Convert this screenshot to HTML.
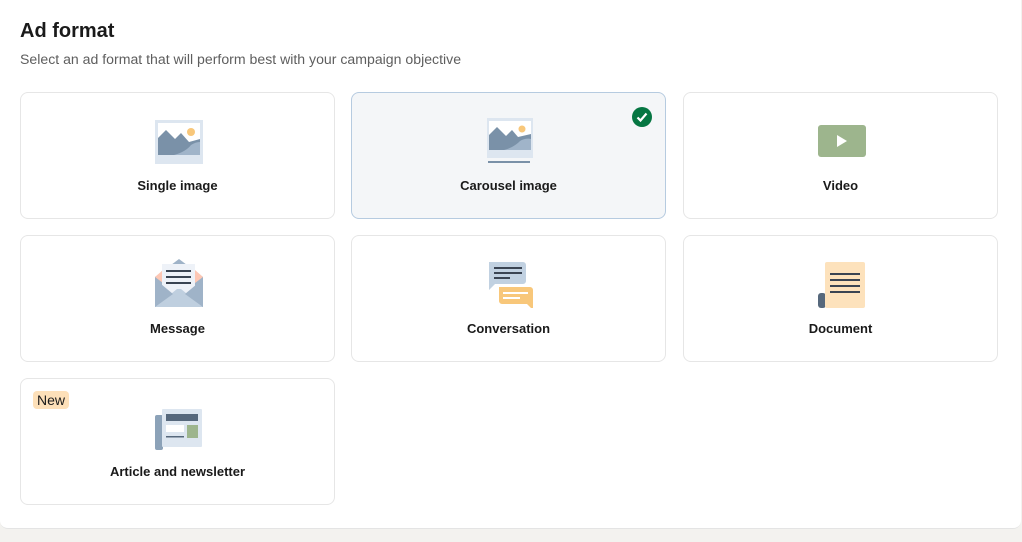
<!DOCTYPE html>
<html><head><style>
body{margin:0;width:1022px;height:542px;background:#f3f2ef;font-family:"Liberation Sans",sans-serif;overflow:hidden;position:relative}
.panel{position:absolute;left:0;top:0;width:1021px;height:528px;background:#fff;border-radius:0 0 8px 8px;border-bottom:1px solid #e4e4e4}
h1{position:absolute;left:20px;top:20px;margin:0;font-size:20px;font-weight:600;color:#1a1a1a}
.sub{position:absolute;left:20px;top:51px;font-size:14.1px;color:#5e5e5e}
.card{position:absolute;width:315px;height:127px;border:1px solid #e6e6e6;border-radius:8px;background:#fff;box-sizing:border-box}
.card.sel{background:#f4f6f8;border-color:#b6cbe0}
.card svg{position:absolute;left:132px;top:22px}
.lbl{position:absolute;left:0;right:0;top:85px;text-align:center;font-size:13px;font-weight:700;color:#1a1a1a}
.new{position:absolute;left:12px;top:12px;background:#fde0b9;border-radius:4px;padding:0 4px;font-size:14px;line-height:18px;color:#1a1a1a}
</style></head><body>
<div class="panel">
<h1>Ad format</h1>
<div class="sub">Select an ad format that will perform best with your campaign objective</div>

<div class="card" style="left:20px;top:92px"><svg width="50" height="50" viewBox="0 0 50 50"><rect x="2" y="5" width="48" height="44" fill="#dde6f0"/><rect x="5" y="8" width="42" height="32" fill="#fff"/><circle cx="38" cy="17" r="4" fill="#f8c77a"/><path d="M5 23l8-8 9 9 6-6 8 9 11-3v16H5z" fill="#7a91a8"/><path d="M21 40c8-2 14-6 17-10 3-2 6-3 9-3v13z" fill="#a0b4c9"/></svg><div class="lbl">Single image</div></div>

<div class="card sel" style="left:351px;top:92px"><svg width="50" height="50" viewBox="0 0 50 50"><rect x="3" y="3" width="46" height="40" fill="#dde6f0"/><rect x="5" y="6" width="42" height="29" fill="#fff"/><circle cx="38" cy="14" r="3.5" fill="#f8c77a"/><path d="M5 20l8-8 9 9 6-6 6 7 13-3v16H5z" fill="#7a91a8"/><path d="M20 35c8-2 13-6 16-9 3-2 8-3 11-2v11z" fill="#a0b4c9"/><rect x="4" y="46" width="42" height="2" fill="#7a91a8"/><rect x="7" y="50" width="36" height="1.5" fill="#c0d0e0"/></svg>
<svg width="20" height="20" viewBox="0 0 20 20" style="left:280px;top:14px"><circle cx="10" cy="10" r="10" fill="#057642"/><path d="M5.5 10.5l3 3 6-7" stroke="#fff" stroke-width="2.2" fill="none"/></svg><div class="lbl">Carousel image</div></div>

<div class="card" style="left:683px;top:92px"><svg width="50" height="50" viewBox="0 0 50 50"><rect x="2" y="10" width="48" height="32" rx="3" fill="#9db58d"/><path d="M21 20v12l10-6z" fill="#fff"/></svg><div class="lbl">Video</div></div>

<div class="card" style="left:20px;top:235px"><svg width="50" height="50" viewBox="0 0 50 50"><path d="M2 19l24-18 24 18v30H2z" fill="#9fb3c8"/><path d="M2 19l8-7h32l8 7-24 18z" fill="#fdc7b4"/><rect x="9" y="6" width="33" height="28" fill="#eef2f8"/><path d="M9 36l17-12 17 12" fill="#eef2f8"/><rect x="13" y="12" width="25" height="2" fill="#3a4452"/><rect x="13" y="18" width="25" height="2" fill="#3a4452"/><rect x="13" y="24" width="25" height="2" fill="#3a4452"/><path d="M2 49l22-18h4l22 18z" fill="#bfcfdf"/><path d="M2 21l18 15-18 13zM50 21l-18 15 18 13z" fill="#9fb3c8"/></svg><div class="lbl">Message</div></div>

<div class="card" style="left:351px;top:235px"><svg width="50" height="50" viewBox="0 0 50 50"><path d="M5 4h34a3 3 0 013 3v16a3 3 0 01-3 3H11l-6 6z" fill="#c1d1e1"/><rect x="10" y="9" width="28" height="2" fill="#3a4452"/><rect x="10" y="14" width="28" height="2" fill="#3a4452"/><rect x="10" y="19" width="16" height="2" fill="#3a4452"/><path d="M15 29h31a3 3 0 013 3v20l-6-6H18a3 3 0 01-3-3z" fill="#f8c77a"/><rect x="19" y="34" width="25" height="2" fill="#fff"/><rect x="19" y="39" width="17" height="2" fill="#fff"/></svg><div class="lbl">Conversation</div></div>

<div class="card" style="left:683px;top:235px"><svg width="50" height="50" viewBox="0 0 50 50"><rect x="2" y="35" width="8" height="15" rx="3" fill="#56687c"/><rect x="9" y="4" width="40" height="46" rx="2" fill="#fde2bc"/><rect x="14" y="15" width="30" height="2" fill="#3a4452"/><rect x="14" y="21" width="30" height="2" fill="#3a4452"/><rect x="14" y="27" width="30" height="2" fill="#3a4452"/><rect x="14" y="33" width="30" height="2" fill="#3a4452"/></svg><div class="lbl">Document</div></div>

<div class="card" style="left:20px;top:378px"><div class="new">New</div><svg width="50" height="50" viewBox="0 0 50 50"><rect x="2" y="14" width="8" height="35" rx="2" fill="#8ca2b8"/><rect x="9" y="8" width="40" height="38" rx="1" fill="#dde6f0"/><rect x="13" y="13" width="32" height="7" fill="#56687c"/><rect x="13" y="24" width="18" height="7" fill="#fff"/><rect x="34" y="24" width="11" height="13" fill="#9db58d"/><rect x="13" y="35" width="18" height="1.5" fill="#56687c"/></svg><div class="lbl">Article and newsletter</div></div>
</div>
</body></html>
